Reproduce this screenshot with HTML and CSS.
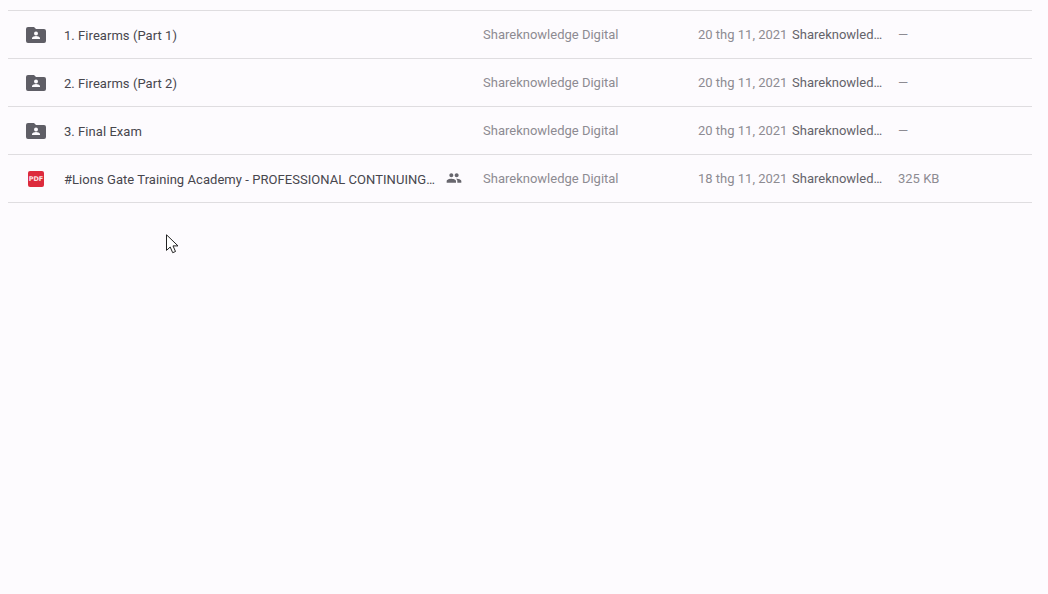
FILE: index.html
```html
<!DOCTYPE html>
<html lang="vi">
<head>
<meta charset="utf-8">
<title>Drive</title>
<link rel="stylesheet" href="styles.css">
</head>
<body>
<main class="list">
  <div class="row">
    <span class="icon"><svg width="20" height="20" viewBox="0 0 20 20"><path class="folder" d="M2 2h6l2 2h8a2 2 0 0 1 2 2v10a2 2 0 0 1-2 2H2a2 2 0 0 1-2-2V4a2 2 0 0 1 2-2z"/><circle class="person" cx="10" cy="8.5" r="2"/><path class="person" d="M6 14v-.9c0-1.3 2.7-2 4-2s4 .7 4 2v.9z"/></svg></span>
    <span class="name"><span class="title">1. Firearms (Part 1)</span></span>
    <span class="owner">Shareknowledge Digital</span>
    <span class="date">20 thg 11, 2021</span>
    <span class="by">Shareknowled…</span>
    <span class="size">—</span>
  </div>
  <div class="row">
    <span class="icon"><svg width="20" height="20" viewBox="0 0 20 20"><path class="folder" d="M2 2h6l2 2h8a2 2 0 0 1 2 2v10a2 2 0 0 1-2 2H2a2 2 0 0 1-2-2V4a2 2 0 0 1 2-2z"/><circle class="person" cx="10" cy="8.5" r="2"/><path class="person" d="M6 14v-.9c0-1.3 2.7-2 4-2s4 .7 4 2v.9z"/></svg></span>
    <span class="name"><span class="title">2. Firearms (Part 2)</span></span>
    <span class="owner">Shareknowledge Digital</span>
    <span class="date">20 thg 11, 2021</span>
    <span class="by">Shareknowled…</span>
    <span class="size">—</span>
  </div>
  <div class="row">
    <span class="icon"><svg width="20" height="20" viewBox="0 0 20 20"><path class="folder" d="M2 2h6l2 2h8a2 2 0 0 1 2 2v10a2 2 0 0 1-2 2H2a2 2 0 0 1-2-2V4a2 2 0 0 1 2-2z"/><circle class="person" cx="10" cy="8.5" r="2"/><path class="person" d="M6 14v-.9c0-1.3 2.7-2 4-2s4 .7 4 2v.9z"/></svg></span>
    <span class="name"><span class="title">3. Final Exam</span></span>
    <span class="owner">Shareknowledge Digital</span>
    <span class="date">20 thg 11, 2021</span>
    <span class="by">Shareknowled…</span>
    <span class="size">—</span>
  </div>
  <div class="row">
    <span class="icon"><span class="pdf">PDF</span></span>
    <span class="name"><span class="title">#Lions Gate Training Academy - PROFESSIONAL CONTINUING…</span>
      <svg class="shared" width="16" height="16" viewBox="0 0 24 24"><path d="M16 11c1.66 0 2.99-1.34 2.99-3S17.66 5 16 5c-1.66 0-3 1.34-3 3s1.34 3 3 3zm-8 0c1.66 0 2.99-1.34 2.99-3S9.66 5 8 5C6.34 5 5 6.34 5 8s1.34 3 3 3zm0 2c-2.33 0-7 1.17-7 3.5V19h14v-2.5c0-2.33-4.67-3.5-7-3.5zm8 0c-.29 0-.62.02-.97.05 1.16.84 1.97 1.97 1.97 3.45V19h6v-2.5c0-2.33-4.67-3.5-7-3.5z"/></svg>
    </span>
    <span class="owner">Shareknowledge Digital</span>
    <span class="date">18 thg 11, 2021</span>
    <span class="by">Shareknowled…</span>
    <span class="size">325 KB</span>
  </div>
</main>
<svg class="cursor" width="13" height="20" viewBox="0 0 13 20"><path d="M.5.8v15.6l3.7-3.4 2.5 5.7 2.8-1.2-2.5-5.6h5z" fill="#fff" stroke="#222" stroke-width="1"/></svg>
</body>
</html>
```
FILE: styles.css
```css
html, body {
  margin: 0;
  height: 100%;
  overflow: hidden;
  background: #fdfbfe;
}
body {
  position: relative;
  font-family: Roboto, "Liberation Sans", sans-serif;
  font-size: 13px;
}
.list {
  margin: 0 16px 0 8px;
  padding-top: 10px;
}
.row {
  display: grid;
  grid-template-columns: 56px 419px 215px 94px 106px 1fr;
  align-items: center;
  height: 47px;
  border-top: 1px solid #dfdde0;
}
.row:last-child {
  border-bottom: 1px solid #dfdde0;
}
.icon {
  display: flex;
  justify-content: flex-start;
  align-items: center;
  padding-left: 18px;
}
.icon svg {
  display: block;
}
.folder {
  fill: #5f5e66;
}
.person {
  fill: #fdfbfe;
}
.pdf {
  display: flex;
  align-items: center;
  justify-content: center;
  width: 16px;
  height: 16px;
  margin-left: 2px;
  border-radius: 2px;
  background: #dd2a3c;
  color: #fbe4e6;
  font-family: "DejaVu Sans", sans-serif;
  font-size: 6.5px;
  font-weight: 700;
}
.name {
  display: flex;
  align-items: center;
  gap: 11px;
  color: #47464d;
}
.title {
  padding-top: 2px;
  letter-spacing: .05px;
  white-space: nowrap;
}
.shared {
  fill: #68676e;
  flex: none;
  margin-top: -1px;
}
.owner, .date, .size {
  color: #8d8b92;
  white-space: nowrap;
}
.by {
  color: #64636a;
  white-space: nowrap;
}
.cursor {
  position: absolute;
  left: 166px;
  top: 234px;
}
```
